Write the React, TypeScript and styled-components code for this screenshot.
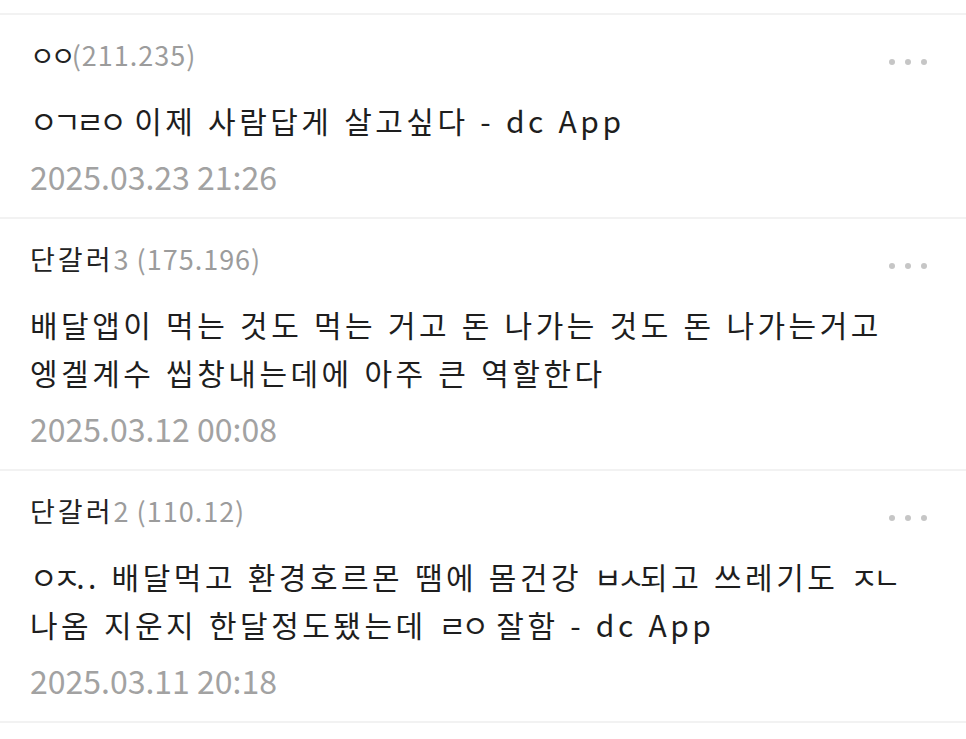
import React from "react";
import styled, { createGlobalStyle } from "styled-components";

const GlobalStyle = createGlobalStyle`
  html, body { margin: 0; padding: 0; background: #ffffff; }
  body { font-family: "Noto Sans CJK KR", "Noto Sans", sans-serif; }
`;

const List = styled.div`
  margin-top: 13px;
  border-top: 2px solid #f2f2f2;
  background: #ffffff;
`;

const Item = styled.div`
  padding: 22px 37px 23px 30px;
  border-bottom: 2px solid #f2f2f2;
  display: flex;
  flex-direction: column;
`;

const Head = styled.div`
  display: flex;
  align-items: center;
  justify-content: space-between;
  height: 36px;
`;

const Name = styled.div`
  font-size: 27px;
  line-height: 36px;
  color: #222222;
  white-space: nowrap;
  letter-spacing: 3px;
`;

const Ip = styled.span`
  color: #9c9c9c;
  letter-spacing: 1px;
`;

const More = styled.div`
  display: flex;
  gap: 10px;
  padding-top: 14px;
  padding-right: 2px;
`;

const Dot = styled.span`
  width: 6px;
  height: 6px;
  border-radius: 50%;
  background: #c6c6c6;
`;

const Body = styled.div`
  margin-top: 23px;
  font-size: 30px;
  line-height: 48px;
  color: #1e1e1e;
  letter-spacing: 3.5px;
  word-spacing: 1.5px;
  white-space: nowrap;
`;

const Jamo = styled.span<{ $tight: number }>`
  letter-spacing: ${(p) => p.$tight}px;
`;

const Date = styled.div`
  margin-top: 14px;
  font-size: 32px;
  line-height: 36px;
  color: #a2a2a2;
`;

type Comment = { name: string; ip: string; lines: string[]; date: string };

const comments: Comment[] = [
  {
    name: "ㅇㅇ",
    ip: "(211.235)",
    lines: ["ㅇㄱㄹㅇ 이제 사람답게 살고싶다 - dc App"],
    date: "2025.03.23 21:26",
  },
  {
    name: "단갈러",
    ip: "3 (175.196)",
    lines: [
      "배달앱이 먹는 것도 먹는 거고 돈 나가는 것도 돈 나가는거고",
      "엥겔계수 씹창내는데에 아주 큰 역할한다",
    ],
    date: "2025.03.12 00:08",
  },
  {
    name: "단갈러",
    ip: "2 (110.12)",
    lines: [
      "ㅇㅈ.. 배달먹고 환경호르몬 땜에 몸건강 ㅂㅅ되고 쓰레기도 ㅈㄴ",
      "나옴 지운지 한달정도됐는데 ㄹㅇ 잘함 - dc App",
    ],
    date: "2025.03.11 20:18",
  },
];

function Runs({ text, tight }: { text: string; tight: number }) {
  const parts = text.split(/([\u3131-\u318E]+)/);
  return (
    <>
      {parts.map((p, i) =>
        /^[\u3131-\u318E]+$/.test(p) ? (
          <Jamo key={i} $tight={tight}>
            {p}
          </Jamo>
        ) : (
          <React.Fragment key={i}>{p}</React.Fragment>
        )
      )}
    </>
  );
}

export default function App() {
  return (
    <>
      <GlobalStyle />
      <List>
        {comments.map((c, i) => (
          <Item key={i}>
            <Head>
              <Name>
                <Runs text={c.name} tight={-4} />
                <Ip>{c.ip}</Ip>
              </Name>
              <More>
                <Dot />
                <Dot />
                <Dot />
              </More>
            </Head>
            <Body>
              {c.lines.map((l, j) => (
                <div key={j}>
                  <Runs text={l} tight={-4.5} />
                </div>
              ))}
            </Body>
            <Date>{c.date}</Date>
          </Item>
        ))}
      </List>
    </>
  );
}
